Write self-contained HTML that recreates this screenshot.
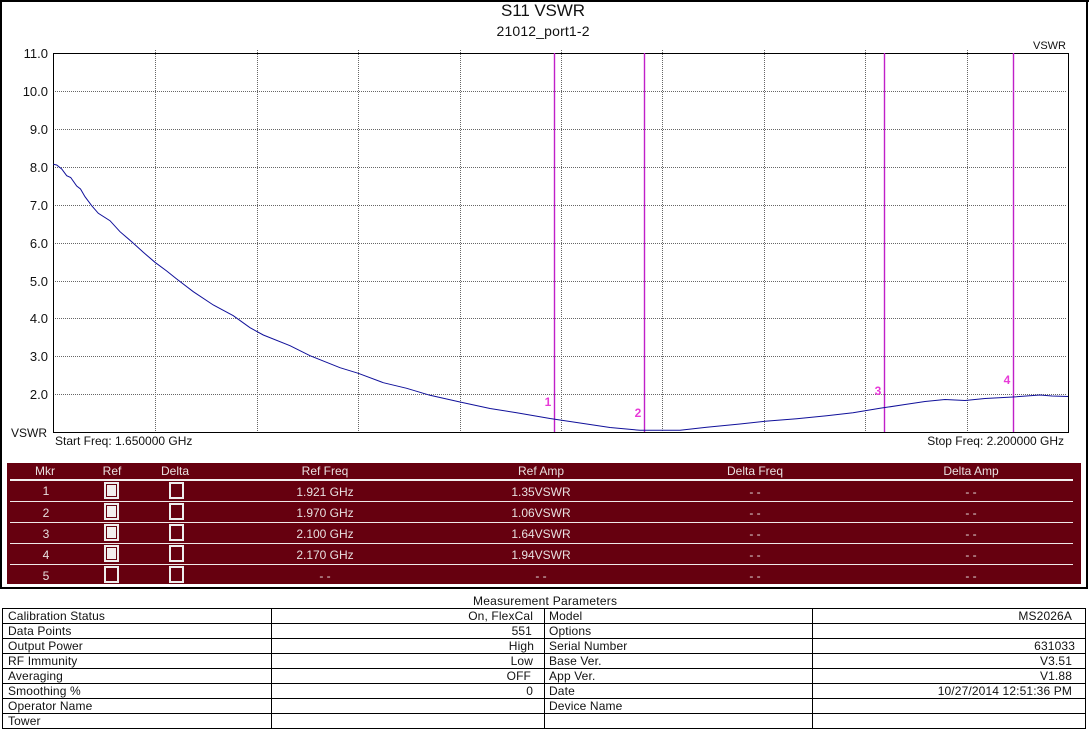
<!DOCTYPE html>
<html><head><meta charset="utf-8"><style>
html,body{margin:0;padding:0;background:#fff;width:1089px;height:730px;overflow:hidden}
svg{display:block;position:absolute;left:0;top:0}
text{font-family:"Liberation Sans",Arial,sans-serif;font-size:12px;fill:#111}
.w text{fill:#e8e0e0;text-anchor:middle}
.e{text-anchor:end}.m{text-anchor:middle}
.mk{fill:#e83ad8;font-weight:bold;font-size:12px;text-anchor:middle}
.p text{letter-spacing:.13px}
</style></head><body>
<svg width="1089" height="730" viewBox="0 0 1089 730" shape-rendering="crispEdges">
<rect width="1089" height="730" fill="#fff"/>
<!-- outer frame -->
<rect x="0" y="0" width="1089" height="2" fill="#000"/>
<rect x="0" y="0" width="2" height="589" fill="#000"/>
<rect x="1086" y="0" width="2" height="589" fill="#000"/>
<rect x="0" y="587" width="1088" height="2" fill="#000"/>
<!-- titles -->
<text x="543" y="16" class="m" style="font-size:17px" textLength="84" lengthAdjust="spacing">S11 VSWR</text>
<text x="543" y="36" class="m" style="font-size:14px" textLength="93" lengthAdjust="spacing">21012_port1-2</text>
<text x="1066" y="49" class="e" style="font-size:11px">VSWR</text>
<!-- grid -->
<g stroke="#666" stroke-width="1" stroke-dasharray="1 1" fill="none">
<path d="M53 91.5H1066M53 129.5H1066M53 167.5H1066M53 205.5H1066M53 243.5H1066M53 281.5H1066M53 318.5H1066M53 356.5H1066M53 394.5H1066"/>
<path d="M155.5 50V432M257.5 50V432M358.5 50V432M460.5 50V432M561.5 50V432M662.5 50V432M764.5 50V432M865.5 50V432M967.5 50V432"/>
</g>
<!-- plot box -->
<path d="M53.5 432.5V53.5H1068.5V432.5H53.5Z" fill="none" stroke="#000" stroke-width="1"/>
<!-- axis labels -->
<g class="e">
<text x="48" y="58" class="e" style="font-size:13px">11.0</text>
<text x="48" y="96" class="e" style="font-size:13px">10.0</text>
<text x="48" y="134" class="e" style="font-size:13px">9.0</text>
<text x="48" y="172" class="e" style="font-size:13px">8.0</text>
<text x="48" y="210" class="e" style="font-size:13px">7.0</text>
<text x="48" y="248" class="e" style="font-size:13px">6.0</text>
<text x="48" y="286" class="e" style="font-size:13px">5.0</text>
<text x="48" y="323" class="e" style="font-size:13px">4.0</text>
<text x="48" y="361" class="e" style="font-size:13px">3.0</text>
<text x="48" y="399" class="e" style="font-size:13px">2.0</text>
</g>
<text x="11" y="437">VSWR</text>
<text x="55" y="445">Start Freq: 1.650000 GHz</text>
<text x="1064" y="445" class="e">Stop Freq: 2.200000 GHz</text>
<!-- markers -->
<g stroke="#c020c8" stroke-width="1.4" shape-rendering="auto">
<path d="M554.5 53V432M644.5 53V432M884.5 53V432M1013.5 53V432"/>
</g>
<!-- trace -->
<polyline shape-rendering="auto" fill="none" stroke="#10109a" stroke-width="1" points="53.3,164.3 56.7,165 61.7,169 66.7,175.7 70.7,177.5 76.7,186 80.5,189 85,196.7 91.7,205.7 98.3,213.3 110,220.7 120,231.7 131.7,241.7 143.3,252.3 155,262.3 166.7,271 176.7,279 193.3,291.7 213.3,305 233.3,315.7 250,327.7 263.3,335 290,345.7 310,355.7 340,367.7 358.3,373.3 383.3,382.7 406.7,388.3 430,395.3 460,402 490,408.5 516.7,412.7 550,418.5 580,423 610,427.5 640,430.3 680,430.3 706.7,427.3 740,424 765,421.3 796.7,418.7 826.7,415.7 853,412.7 880,408.3 905,404.5 925,401.5 945,399.5 965,400.5 985,398.5 1013,397 1040,395 1052,396 1068,396.5"/>
<text x="548" y="406" class="mk">1</text>
<text x="638" y="417" class="mk">2</text>
<text x="878" y="395" class="mk">3</text>
<text x="1007" y="384" class="mk">4</text>
<!-- marker table -->
<rect x="7" y="463" width="1074" height="121" fill="#66000f"/>
<rect x="10" y="479" width="1063" height="2" fill="#f4efef"/>
<g fill="#f0e8e8">
<rect x="10" y="501" width="1063" height="1"/>
<rect x="10" y="522" width="1063" height="1"/>
<rect x="10" y="543" width="1063" height="1"/>
<rect x="10" y="564" width="1063" height="1"/>
</g>
<g class="w">
<text x="45" y="475">Mkr</text><text x="112" y="475">Ref</text><text x="175" y="475">Delta</text><text x="325" y="475">Ref Freq</text><text x="541" y="475">Ref Amp</text><text x="755" y="475">Delta Freq</text><text x="971" y="475">Delta Amp</text>
<text x="46" y="495">1</text><text x="325" y="496">1.921 GHz</text><text x="541" y="496">1.35VSWR</text><text x="755" y="496">- -</text><text x="971" y="496">- -</text>
<text x="46" y="517">2</text><text x="325" y="517">1.970 GHz</text><text x="541" y="517">1.06VSWR</text><text x="755" y="517">- -</text><text x="971" y="517">- -</text>
<text x="46" y="538">3</text><text x="325" y="538">2.100 GHz</text><text x="541" y="538">1.64VSWR</text><text x="755" y="538">- -</text><text x="971" y="538">- -</text>
<text x="46" y="559">4</text><text x="325" y="559">2.170 GHz</text><text x="541" y="559">1.94VSWR</text><text x="755" y="559">- -</text><text x="971" y="559">- -</text>
<text x="46" y="580">5</text><text x="325" y="580">- -</text><text x="541" y="580">- -</text><text x="755" y="580">- -</text><text x="971" y="580">- -</text>
</g>
<!-- checkboxes -->
<g fill="none" stroke="#eee" stroke-width="2">
<rect x="105" y="483" width="13" height="15"/><rect x="105" y="504" width="13" height="15"/><rect x="105" y="525" width="13" height="15"/><rect x="105" y="546" width="13" height="15"/><rect x="105" y="567" width="13" height="15"/>
<rect x="170" y="483" width="13" height="15"/><rect x="170" y="504" width="13" height="15"/><rect x="170" y="525" width="13" height="15"/><rect x="170" y="546" width="13" height="15"/><rect x="170" y="567" width="13" height="15"/>
</g>
<g fill="#f2eeee">
<rect x="107" y="485" width="9" height="11"/><rect x="107" y="506" width="9" height="11"/><rect x="107" y="527" width="9" height="11"/><rect x="107" y="548" width="9" height="11"/>
</g>
<!-- params table -->
<text x="545" y="605" class="m" textLength="144" lengthAdjust="spacing">Measurement Parameters</text>
<g fill="#000">
<rect x="2" y="608" width="1084" height="1"/><rect x="2" y="623" width="1084" height="1"/><rect x="2" y="638" width="1084" height="1"/><rect x="2" y="653" width="1084" height="1"/><rect x="2" y="668" width="1084" height="1"/><rect x="2" y="683" width="1084" height="1"/><rect x="2" y="698" width="1084" height="1"/><rect x="2" y="713" width="1084" height="1"/><rect x="2" y="728" width="1084" height="1"/>
<rect x="2" y="608" width="1" height="121"/><rect x="271" y="608" width="1" height="121"/><rect x="544" y="608" width="1" height="121"/><rect x="812" y="608" width="1" height="121"/><rect x="1085" y="608" width="1" height="121"/>
</g>
<g class="p">
<text x="8" y="620">Calibration Status</text><text x="533" y="620" class="e">On, FlexCal</text><text x="549" y="620">Model</text><text x="1072" y="620" class="e">MS2026A</text>
<text x="8" y="635">Data Points</text><text x="532" y="635" class="e">551</text><text x="549" y="635">Options</text>
<text x="8" y="650">Output Power</text><text x="534" y="650" class="e">High</text><text x="549" y="650">Serial Number</text><text x="1075" y="650" class="e">631033</text>
<text x="8" y="665">RF Immunity</text><text x="533" y="665" class="e">Low</text><text x="549" y="665">Base Ver.</text><text x="1072" y="665" class="e">V3.51</text>
<text x="8" y="680">Averaging</text><text x="531" y="680" class="e">OFF</text><text x="549" y="680">App Ver.</text><text x="1072" y="680" class="e">V1.88</text>
<text x="8" y="695">Smoothing %</text><text x="533" y="695" class="e">0</text><text x="549" y="695">Date</text><text x="1072" y="695" class="e">10/27/2014 12:51:36 PM</text>
<text x="8" y="710">Operator Name</text><text x="549" y="710">Device Name</text>
<text x="8" y="725">Tower</text>
</g>
</svg>
</body></html>
